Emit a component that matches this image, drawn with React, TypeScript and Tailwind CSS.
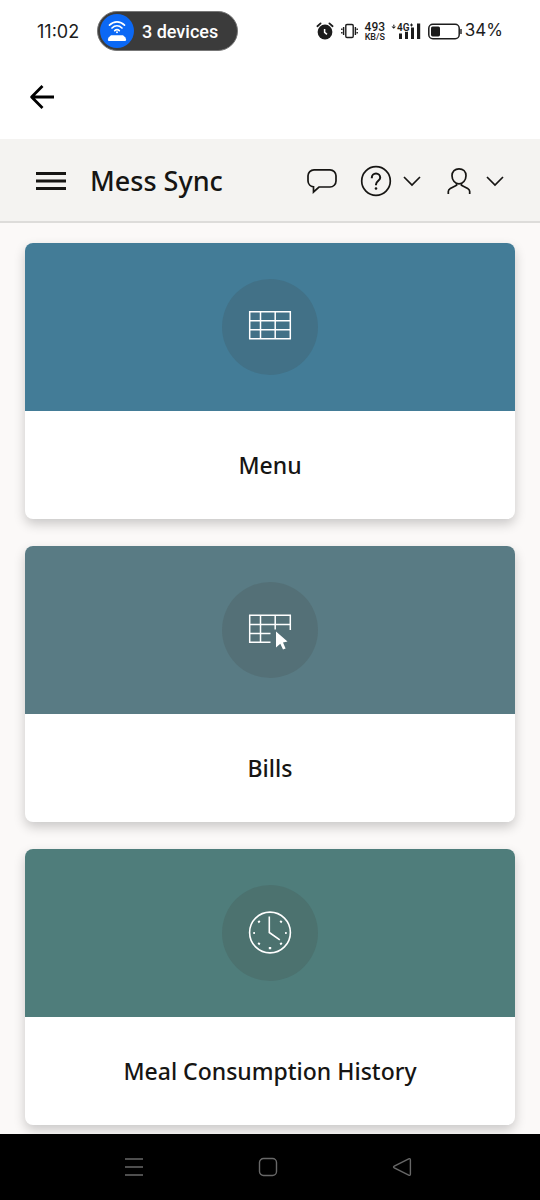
import React from 'react';

function StatusBar() {
  return (
    <div className="flex h-[62px] items-center justify-between pr-[37px] pl-[37px] font-['Roboto',sans-serif] text-[#1c1c1c]">
      <div className="flex items-center gap-[18px]">
        <time className="w-[42px] text-center font-['Inter','Roboto',sans-serif] text-[18px] whitespace-nowrap">11:02</time>
        <div className="flex h-10 items-center gap-2 rounded-full border border-[#777] bg-[#3b3b3b] pr-[19px] pl-[2px] text-white">
          <span className="flex size-[34px] items-center justify-center rounded-full bg-[#0b68f5]">
            <svg width="22" height="24" viewBox="0 0 22 24" fill="none" stroke="#fff" strokeWidth="1.7" strokeLinecap="round">
              <path d="M3.5 6.2C7.8 1.8 14.2 1.8 18.5 6.2M6 9C9 6.2 13 6.2 16 9M8.7 11.6C10.2 10.3 11.8 10.3 13.3 11.6" />
              <circle cx="11" cy="13.2" r="1" fill="#fff" stroke="none" />
              <path d="M5 16.2H17L19.4 18.6Q21 22 19 22H3Q1 22 2.6 18.6Z" fill="#fff" stroke="none" />
            </svg>
          </span>
          <span className="text-[18px] font-medium whitespace-nowrap">3 devices</span>
        </div>
      </div>
      <div className="flex items-center">
        <svg width="18" height="18" viewBox="0 0 18 18" fill="none">
          <circle cx="9" cy="10" r="7.4" fill="#1c1c1c" />
          <path d="M1.4 4.2L4.6 1.4M16.6 4.2L13.4 1.4" stroke="#1c1c1c" strokeWidth="1.8" strokeLinecap="round" />
          <path d="M8.6 7V10.4L11 12.4" stroke="#fff" strokeWidth="1.5" />
        </svg>
        <svg className="ml-[7px]" width="17" height="16" viewBox="0 0 17 16" fill="none" stroke="#1c1c1c" strokeWidth="1.4">
          <rect x="4.8" y="1.5" width="7.4" height="13" rx="1.2" />
          <path d="M2.6 4V12M14.4 4V12M.8 5.5V7M.8 9V10.5M16.2 5.5V7M16.2 9V10.5" />
        </svg>
        <div className="ml-[6px] flex w-[22px] flex-col items-center">
          <span className="text-[12px] leading-[12px] font-medium">493</span>
          <span className="text-[9px] leading-[9px] font-medium">KB/S</span>
        </div>
        <svg className="ml-[5px]" width="31" height="18" viewBox="0 0 31 18" fill="#1c1c1c">
          <path d="M.5 4.5H5L2.75 6.8ZM2 2.8H3.5V3.8H2Z" />
          <path d="M8 11.5H11V17H8ZM14 9H17V17H14ZM20 5.5H23V17H20ZM26 1.5H29.2V17H26Z" />
          <text x="6" y="8.5" fontFamily="Roboto, sans-serif" fontSize="10" fontWeight="600" stroke="#fff" strokeWidth="1.4" paintOrder="stroke">4G</text>
          <path d="M19 3H22M20.5 1.5V4.5" stroke="#1c1c1c" />
        </svg>
        <svg className="ml-[6px]" width="34" height="17" viewBox="0 0 34 17" fill="none">
          <rect x=".8" y="1.3" width="30.4" height="14.4" rx="4" stroke="#1c1c1c" strokeWidth="1.5" />
          <rect x="3" y="3.6" width="9" height="9.8" rx="1.6" fill="#1c1c1c" />
          <path d="M33 6V11" stroke="#1c1c1c" strokeWidth="1.4" />
        </svg>
        <span className="ml-[3px] font-['Inter','Roboto',sans-serif] text-[17px] whitespace-nowrap">34%</span>
      </div>
    </div>
  );
}

function Chevron() {
  return (
    <svg width="18" height="12" viewBox="0 0 18 12" fill="none" stroke="#161513" strokeWidth="1.7">
      <path d="M1 2L9 10L17 2" />
    </svg>
  );
}

function AppHeader() {
  return (
    <header className="flex h-[84px] items-center justify-between border-b-2 border-[#dddcda] bg-[#f4f3f1] px-9 pt-[2px]">
      <div className="flex items-center gap-6">
        <button type="button" aria-label="Open navigation">
          <svg width="30" height="20" viewBox="0 0 30 20" stroke="#161513" strokeWidth="3">
            <path d="M0 2.5H30M0 10H30M0 17.5H30" />
          </svg>
        </button>
        <h1 className="text-[27px] leading-9 font-medium whitespace-nowrap">Mess Sync</h1>
      </div>
      <div className="flex items-center">
        <button type="button" aria-label="Messages">
          <svg width="32" height="28" viewBox="0 0 32 28" fill="none" stroke="#161513" strokeWidth="1.7">
            <path d="M8 2.8H24A6 6 0 0 1 30 8.8V14A6 6 0 0 1 24 20H13L7.5 25V19.8A6 6 0 0 1 2 14V8.8A6 6 0 0 1 8 2.8Z" />
          </svg>
        </button>
        <button type="button" aria-label="Help" className="ml-[22px] flex items-center gap-[11px]">
          <svg width="32" height="32" viewBox="0 0 32 32" fill="none" stroke="#161513" strokeWidth="1.7">
            <circle cx="16" cy="16" r="14.3" />
            <path d="M11.8 13.2V12.8A4.2 4.2 0 0 1 20.2 12.8C20.2 15.5 16 16 16 19.4V20.2" strokeWidth="2" />
            <circle cx="16" cy="23.5" r="1.3" fill="#161513" stroke="none" />
          </svg>
          <Chevron />
        </button>
        <button type="button" aria-label="Account" className="ml-[26px] flex items-center gap-[15px]">
          <svg width="24" height="28" viewBox="0 0 24 28" fill="none" stroke="#161513" strokeWidth="1.7">
            <path d="M12 1.8C16 1.8 19 4.5 19 8.8C19 13.2 15.8 16.9 12 16.9S5 13.2 5 8.8C5 4.5 8 1.8 12 1.8Z" />
            <path d="M9.6 16.3V18.2L3.3 21.4Q1.3 22.5 1.3 24.5V27M14.4 16.3V18.2L20.7 21.4Q22.7 22.5 22.7 24.5V27" />
          </svg>
          <Chevron />
        </button>
      </div>
    </header>
  );
}

const menuIcon = (
  <svg width="44" height="44" viewBox="0 0 44 44" fill="none" stroke="#fff" strokeWidth="1.5">
    <path d="M1.7 6.7H42.3V33.7H1.7ZM1.7 15.8H42.3M1.7 24.7H42.3M12.5 6.7V33.7M27.2 6.7V33.7" />
  </svg>
);

const billsIcon = (
  <svg width="44" height="44" viewBox="0 0 44 44" fill="none" stroke="#fff" strokeWidth="1.5">
    <path d="M22.5 34.2H1.7V7.2H42.3V22M1.7 16.5H42.3M1.7 25.5H22.5M12.5 7.2V34.2M27.2 7.2V21.5" />
    <path d="M28 23.5L39.5 33.5L35 34.4L37.6 40.4L35 41.5L32.3 35.8L28 39.5Z" fill="#fff" stroke="none" />
  </svg>
);

const historyIcon = (
  <svg width="44" height="44" viewBox="0 0 44 44" fill="none" stroke="#fff" strokeWidth="1.6">
    <circle cx="22" cy="21.5" r="20.4" />
    <path d="M21.3 5.5V21.5L31.8 28.8" />
    <path d="M5.3 22H6.9M37.1 22H38.7M20.8 37.2H23.2M10.3 10L11.7 11.4M33.7 10L32.3 11.4M10.3 33.4L11.7 32M33.7 33.4L32.3 32" strokeWidth="2.2" />
  </svg>
);

const cards = [
  { title: 'Menu', tone: 'bg-[#437c97]', icon: menuIcon },
  { title: 'Bills', tone: 'bg-[#597b84]', icon: billsIcon },
  { title: 'Meal Consumption History', tone: 'bg-[#4f7d7b]', icon: historyIcon },
];

function SystemNav() {
  return (
    <nav className="sticky bottom-0 grid h-[66px] grid-cols-3 place-items-center bg-black pr-[71px] pl-[67px]">
      <button type="button" aria-label="Recent apps">
        <svg width="20" height="20" viewBox="0 0 20 20" stroke="#686868" strokeWidth="1.5">
          <path d="M1 2H19M1 10H19M1 18H19" />
        </svg>
      </button>
      <button type="button" aria-label="Home">
        <svg width="20" height="20" viewBox="0 0 20 20" fill="none" stroke="#686868" strokeWidth="1.4">
          <rect x="1.5" y="1.5" width="17" height="17" rx="4" />
        </svg>
      </button>
      <button type="button" aria-label="Back">
        <svg width="20" height="20" viewBox="0 0 20 20" fill="none" stroke="#686868" strokeWidth="1.4">
          <path d="M2.3 9Q.8 10 2.3 11L16.7 18.2Q18.4 18.8 18.4 17V3Q18.4 1.2 16.7 1.8Z" />
        </svg>
      </button>
    </nav>
  );
}

export default function App() {
  return (
    <div className="flex min-h-screen flex-col bg-[#fbf9f8] font-['Noto_Sans',sans-serif] text-[#161513]">
      <div className="bg-white">
        <StatusBar />
        <div className="flex h-[77px] items-center px-[29px] pb-[7px]">
          <button type="button" aria-label="Go back">
            <svg width="26" height="26" viewBox="0 0 26 26" fill="none" stroke="#000" strokeWidth="2.8" strokeLinejoin="round">
              <path d="M25 13H3M13.5 2L2.6 13L13.5 24" />
            </svg>
          </button>
        </div>
      </div>
      <AppHeader />
      <main className="flex flex-1 flex-col gap-[27px] px-[25px] pt-5 pb-[9px]">
        {cards.map((card) => (
          <a
            key={card.title}
            href="#"
            className="block overflow-hidden rounded-lg bg-white shadow-[0_5px_12px_rgba(0,0,0,0.2)]"
          >
            <div className={`flex h-[168px] items-center justify-center ${card.tone}`}>
              <span className="flex size-24 items-center justify-center rounded-full bg-[#3a3632]/15">{card.icon}</span>
            </div>
            <h2 className="flex h-[108px] items-center justify-center text-center text-[23px] leading-8 font-medium">
              {card.title}
            </h2>
          </a>
        ))}
      </main>
      <SystemNav />
    </div>
  );
}
